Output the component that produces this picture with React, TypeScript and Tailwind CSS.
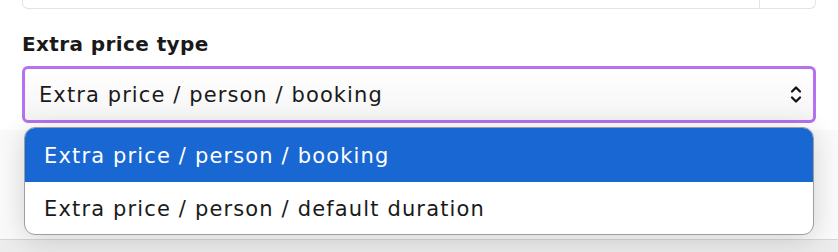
import React from 'react';

const options = [
  'Extra price / person / booking',
  'Extra price / person / default duration',
];

const ChevronUpDown = () => (
  <svg width="12" height="19" viewBox="0 0 12 19" fill="none" stroke="#111" strokeWidth="2.3" strokeLinecap="round" strokeLinejoin="round">
    <path d="M2 6.5 L6 2.5 L10 6.5" />
    <path d="M2 12.5 L6 16.5 L10 12.5" />
  </svg>
);

const App = () => {
  return (
    <div
      className="relative w-[838px] h-[252px] overflow-hidden bg-white text-[#1a1a1a]"
      style={{ fontFamily: '"DejaVu Sans", "Noto Sans", sans-serif' }}
    >
      <div className="px-[22px]">
        {/* previous field, cut off at the top */}
        <div className="flex h-[9px] rounded-b-md border-x border-b border-[#e3e3e3]">
          <div className="flex-1" />
          <div className="w-[56px] border-l border-[#e3e3e3]" />
        </div>

        <label className="mt-[22px] block text-[20px] font-semibold leading-[26px] tracking-[0.4px]">
          Extra price type
        </label>

        <div className="mt-[9px] flex h-[57px] items-center justify-between rounded-[6px] border-[3px] border-[#b571ef] bg-gradient-to-b from-white to-[#f5f5f5] pl-[14px] pr-[11px] text-[21px]">
          <span className="pt-[3px] tracking-[1.1px]">{options[0]}</span>
          <ChevronUpDown />
        </div>
      </div>

      {/* area behind the open list */}
      <div className="mt-[7px] h-[110px] border-b border-[#d6d6d6] bg-[#fafafa]" />
      <div className="h-[20px] bg-[#ececec]" />

      {/* open list */}
      <div className="absolute left-[24px] top-[127px] w-[790px] overflow-hidden rounded-[11px] border border-[#9e9e9e] bg-white shadow-[0_4px_28px_rgba(0,0,0,0.16)]">
        {options.map((opt, i) => (
          <div
            key={opt}
            className={
              i === 0
                ? 'flex h-[54px] items-center bg-[#1967d2] pl-[19px] pt-[3px] text-[21px] text-white'
                : 'flex h-[52px] items-center pl-[19px] pt-[4px] text-[21px] text-[#1a1a1a]'
            }
          >
            <span className="tracking-[1.15px]">{opt}</span>
          </div>
        ))}
      </div>
    </div>
  );
};

export default App;
